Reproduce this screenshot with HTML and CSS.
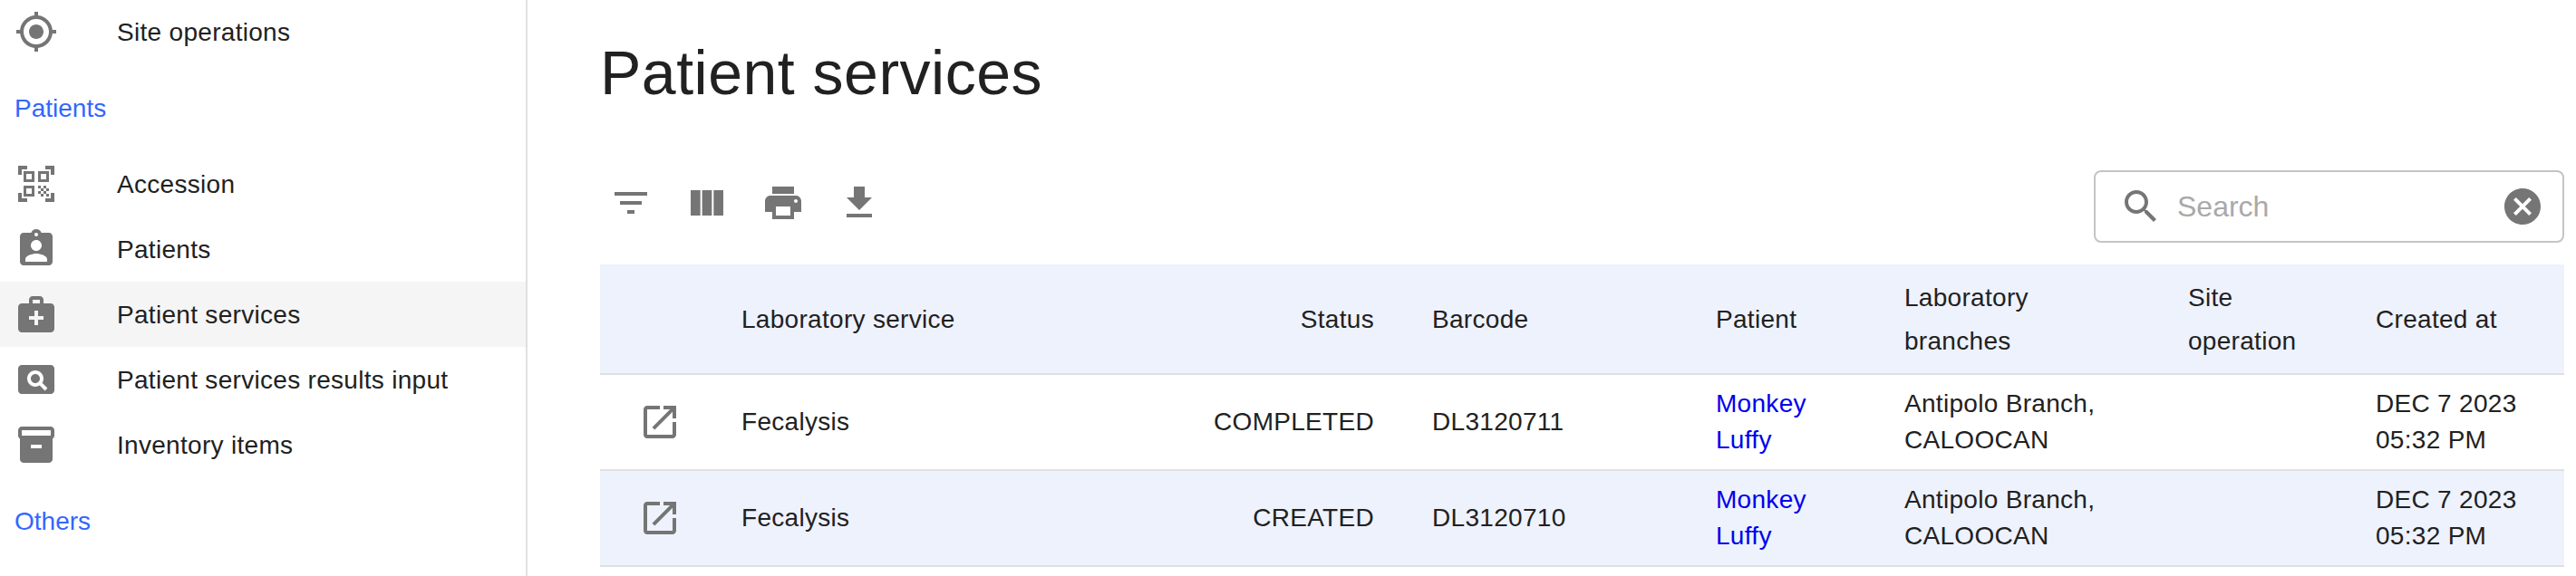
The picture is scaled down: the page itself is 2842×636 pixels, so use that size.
FILE: index.html
```html
<!DOCTYPE html>
<html lang="en">
<head>
  <meta charset="UTF-8" />
  <title>Patient services</title>
  <link rel="stylesheet" href="styles.css">
</head>
<body>
  <div class="app">
    <nav class="sidebar">
      <a class="nav-item nav-first">
        <svg class="icon nav-icon" viewBox="0 0 24 24"><path d="M12 8c-2.21 0-4 1.79-4 4s1.79 4 4 4 4-1.79 4-4-1.79-4-4-4zm8.94 3c-.46-4.17-3.77-7.48-7.94-7.94V1h-2v2.06C6.83 3.52 3.52 6.83 3.06 11H1v2h2.06c.46 4.17 3.77 7.48 7.94 7.94V23h2v-2.06c4.17-.46 7.48-3.77 7.94-7.94H23v-2h-2.06zM12 19c-3.87 0-7-3.13-7-7s3.13-7 7-7 7 3.13 7 7-3.13 7-7 7z"/></svg>
        <span>Site operations</span>
      </a>
      <div class="nav-heading">Patients</div>
      <a class="nav-item">
        <svg class="icon nav-icon" viewBox="0 0 24 24"><path d="M9.5 6.5v3h-3v-3h3M11 5H5v6h6V5zm-1.5 9.5v3h-3v-3h3M11 13H5v6h6v-6zm6.5-6.5v3h-3v-3h3M19 5h-6v6h6V5zm-6 8h1.5v1.5H13V13zm1.5 1.5H16V16h-1.5v-1.5zM16 13h1.5v1.5H16V13zm-3 3h1.5v1.5H13V16zm1.5 1.5H16V19h-1.5v-1.5zM16 16h1.5v1.5H16V16zm1.5-1.5H19V16h-1.5v-1.5zm0 3H19V19h-1.5v-1.5zM22 7h-2V4h-3V2h5v5zm0 15v-5h-2v3h-3v2h5zM2 22h5v-2H4v-3H2v5zM2 2v5h2V4h3V2H2z"/></svg>
        <span>Accession</span>
      </a>
      <a class="nav-item">
        <svg class="icon nav-icon" viewBox="0 0 24 24"><path d="M19 3h-4.18C14.4 1.84 13.3 1 12 1c-1.3 0-2.4.84-2.82 2H5c-1.1 0-2 .9-2 2v14c0 1.1.9 2 2 2h14c1.1 0 2-.9 2-2V5c0-1.1-.9-2-2-2zm-7 0c.55 0 1 .45 1 1s-.45 1-1 1-1-.45-1-1 .45-1 1-1zm0 4c1.66 0 3 1.34 3 3s-1.34 3-3 3-3-1.34-3-3 1.34-3 3-3zm6 12H6v-1.4c0-2 4-3.1 6-3.1s6 1.1 6 3.1V19z"/></svg>
        <span>Patients</span>
      </a>
      <a class="nav-item active">
        <svg class="icon nav-icon" viewBox="0 0 24 24"><path d="M20 6h-4V4c0-1.1-.9-2-2-2h-4c-1.1 0-2 .9-2 2v2H4c-1.1 0-2 .9-2 2v12c0 1.1.9 2 2 2h16c1.1 0 2-.9 2-2V8c0-1.1-.9-2-2-2zM10 4h4v2h-4V4zm6 11h-3v3h-2v-3H8v-2h3v-3h2v3h3v2z"/></svg>
        <span>Patient services</span>
      </a>
      <a class="nav-item">
        <svg class="icon nav-icon" viewBox="0 0 24 24"><path d="M11.5 9C10.12 9 9 10.12 9 11.5s1.12 2.5 2.5 2.5 2.5-1.12 2.5-2.5S12.88 9 11.5 9zM20 4H4c-1.1 0-2 .9-2 2v12c0 1.1.9 2 2 2h16c1.1 0 2-.9 2-2V6c0-1.1-.9-2-2-2zm-3.21 14.21l-2.91-2.91c-.69.44-1.51.7-2.38.7C9.01 16 7 13.99 7 11.5S9.01 7 11.5 7 16 9.01 16 11.5c0 .88-.26 1.69-.7 2.39l2.91 2.9-1.42 1.42z"/></svg>
        <span>Patient services results input</span>
      </a>
      <a class="nav-item">
        <svg class="icon nav-icon" viewBox="0 0 24 24"><path d="M20 2H4c-1 0-2 .9-2 2v3.01c0 .72.43 1.34 1 1.69V20c0 1.1 1.1 2 2 2h14c.9 0 2-.9 2-2V8.7c.57-.35 1-.97 1-1.69V4c0-1.1-1-2-2-2zm-5 12H9v-2h6v2zm5-7H4V4l16-.02V7z"/></svg>
        <span>Inventory items</span>
      </a>
      <div class="nav-heading nav-heading-last">Others</div>
    </nav>

    <main class="content">
      <h1 class="page-title">Patient services</h1>

      <div class="toolbar">
        <div class="toolbar-actions">
          <svg class="icon" viewBox="0 0 24 24"><path d="M10 18h4v-2h-4v2zM3 6v2h18V6H3zm3 7h12v-2H6v2z"/></svg>
          <svg class="icon" viewBox="0 0 24 24"><path d="M14.67 5v14H9.33V5h5.34zm1 14H21V5h-5.33v14zm-7.34 0V5H3v14h5.33z"/></svg>
          <svg class="icon" viewBox="0 0 24 24"><path d="M19 8H5c-1.66 0-3 1.34-3 3v6h4v4h12v-4h4v-6c0-1.66-1.34-3-3-3zm-3 11H8v-5h8v5zm3-7c-.55 0-1-.45-1-1s.45-1 1-1 1 .45 1 1-.45 1-1 1zm-1-9H6v4h12V3z"/></svg>
          <svg class="icon" viewBox="0 0 24 24"><path d="M19 9h-4V3H9v6H5l7 7 7-7zM5 18v2h14v-2H5z"/></svg>
        </div>
        <div class="search-box">
          <svg class="icon" viewBox="0 0 24 24"><path d="M15.5 14h-.79l-.28-.27C15.41 12.59 16 11.11 16 9.5 16 5.91 13.09 3 9.5 3S3 5.91 3 9.5 5.91 16 9.5 16c1.61 0 3.09-.59 4.23-1.57l.27.28v.79l5 4.99L20.49 19l-4.99-5zm-6 0C7.01 14 5 11.99 5 9.5S7.01 5 9.5 5 14 7.01 14 9.5 11.99 14 9.5 14z"/></svg>
          <span class="search-placeholder">Search</span>
          <svg class="icon" viewBox="0 0 24 24"><path d="M12 2C6.47 2 2 6.47 2 12s4.47 10 10 10 10-4.47 10-10S17.53 2 12 2zm5 13.59L15.59 17 12 13.41 8.41 17 7 15.59 10.59 12 7 8.41 8.41 7 12 10.59 15.59 7 17 8.41 13.41 12 17 15.59z"/></svg>
        </div>
      </div>

      <table class="data-table">
        <colgroup>
          <col class="col-open">
          <col class="col-service">
          <col class="col-status">
          <col class="col-barcode">
          <col class="col-patient">
          <col class="col-branches">
          <col class="col-site">
          <col class="col-created">
        </colgroup>
        <thead>
          <tr>
            <th></th>
            <th>Laboratory service</th>
            <th class="align-right">Status</th>
            <th>Barcode</th>
            <th>Patient</th>
            <th>Laboratory branches</th>
            <th>Site operation</th>
            <th>Created at</th>
          </tr>
        </thead>
        <tbody>
          <tr>
            <td class="cell-open"><svg class="icon" viewBox="0 0 24 24"><path d="M19 19H5V5h7V3H5c-1.11 0-2 .9-2 2v14c0 1.1.89 2 2 2h14c1.1 0 2-.9 2-2v-7h-2v7zM14 3v2h3.59l-9.83 9.83 1.41 1.41L19 6.41V10h2V3h-7z"/></svg></td>
            <td>Fecalysis</td>
            <td class="align-right">COMPLETED</td>
            <td>DL3120711</td>
            <td><a class="patient-link">Monkey Luffy</a></td>
            <td>Antipolo Branch, CALOOCAN</td>
            <td></td>
            <td>DEC 7 2023 05:32 PM</td>
          </tr>
          <tr class="row-alt">
            <td class="cell-open"><svg class="icon" viewBox="0 0 24 24"><path d="M19 19H5V5h7V3H5c-1.11 0-2 .9-2 2v14c0 1.1.89 2 2 2h14c1.1 0 2-.9 2-2v-7h-2v7zM14 3v2h3.59l-9.83 9.83 1.41 1.41L19 6.41V10h2V3h-7z"/></svg></td>
            <td>Fecalysis</td>
            <td class="align-right">CREATED</td>
            <td>DL3120710</td>
            <td><a class="patient-link">Monkey Luffy</a></td>
            <td>Antipolo Branch, CALOOCAN</td>
            <td></td>
            <td>DEC 7 2023 05:32 PM</td>
          </tr>
        </tbody>
      </table>
    </main>
  </div>
</body>
</html>
```

FILE: styles.css
```css
html, body {
  margin: 0;
  height: 100%;
  overflow: hidden;
}
body {
  background: #fff;
  color: #212121;
  font-family: "Liberation Sans", Arial, sans-serif;
  font-size: 28px;
  letter-spacing: 0.01071em;
}
.app {
  display: flex;
  height: 636px;
}
.icon {
  display: block;
  width: 48px;
  height: 48px;
  fill: #757575;
  flex-shrink: 0;
}

/* sidebar */
.sidebar {
  width: 580px;
  border-right: 2px solid #e0e0e0;
  flex-shrink: 0;
}
.nav-item {
  display: flex;
  align-items: center;
  height: 72px;
  padding-left: 16px;
}
.nav-item span {
  padding-top: 2px;
}
.nav-first {
  height: 70px;
}
.nav-item.active {
  background: #f5f5f5;
}
.nav-icon {
  margin-right: 65px;
}
.nav-heading {
  height: 97px;
  padding: 34px 0 0 16px;
  box-sizing: border-box;
  line-height: 32px;
  color: #3366ff;
  letter-spacing: 0;
}
.nav-heading-last {
  padding-top: 33px;
}

/* main */
.content {
  flex: 1;
  min-width: 0;
  padding: 40px 13px 0 80px;
}
.page-title {
  margin: 0;
  font-size: 68px;
  font-weight: 400;
  line-height: 80px;
  letter-spacing: 0.00735em;
}
.toolbar {
  display: flex;
  justify-content: space-between;
  align-items: flex-start;
  margin-top: 68px;
  margin-bottom: 24px;
}
.toolbar-actions {
  display: flex;
  gap: 36px;
  padding: 12px 0 0 10px;
}
.search-box {
  display: flex;
  align-items: center;
  width: 519px;
  height: 80px;
  box-sizing: border-box;
  padding: 0 20px 0 26px;
  border: 2px solid #c4c4c4;
  border-radius: 8px;
}
.search-placeholder {
  flex: 1;
  margin-left: 16px;
  font-size: 32px;
  letter-spacing: 0;
  color: #a9a9a9;
}

/* table */
.data-table {
  width: 2167px;
  table-layout: fixed;
  border-collapse: collapse;
}
.col-open { width: 124px; }
.col-service { width: 454px; }
.col-status { width: 308px; }
.col-barcode { width: 313px; }
.col-patient { width: 208px; }
.col-branches { width: 313px; }
.col-site { width: 207px; }
.col-created { width: 240px; }
th, td {
  padding: 0 32px;
  text-align: left;
  font-weight: 400;
  border-bottom: 2px solid #e0e0e0;
  vertical-align: middle;
}
th {
  height: 118px;
  padding-top: 2px;
  line-height: 48px;
  background: #eef2fd;
}
td {
  height: 104px;
  line-height: 40px;
}
.row-alt td {
  background: #eef2fd;
}
th.align-right, td.align-right {
  text-align: right;
}
.cell-open {
  padding: 0 0 0 42px;
}
.patient-link {
  color: #0000ee;
}
```
